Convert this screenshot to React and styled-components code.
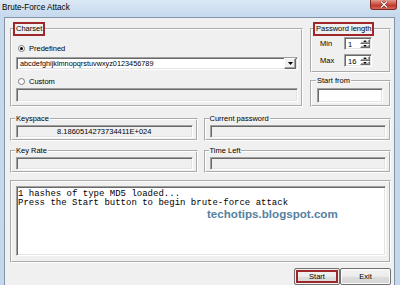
import React from 'react'
import styled, {createGlobalStyle, css} from 'styled-components'

const GlobalStyle = createGlobalStyle`
  html, body {
    margin: 0;
    padding: 0;
  }
  body {
    width: 400px;
    height: 285px;
    overflow: hidden;
    background: #c4d7eb;
    font-family: "Liberation Sans", Arial, sans-serif;
  }
  * {
    box-sizing: border-box;
  }
`

const sunken = css`
  border-style: solid;
  border-width: 1px;
  border-color: #a0a0a0 #ffffff #ffffff #a0a0a0;
  box-shadow: inset 1px 1px 0 #696969, inset -1px -1px 0 #e3e3e3;
`

const raised = css`
  border-style: solid;
  border-width: 1px;
  border-color: #ffffff #696969 #696969 #ffffff;
  box-shadow: inset -1px -1px 0 #a0a0a0;
  background: #f0f0f0;
`

const Window = styled.div`
  width: 400px;
  height: 285px;
  display: flex;
  flex-direction: column;
  background: linear-gradient(180deg, #dbe8f5 0px, #c6d9ed 16px, #c4d7eb 100%);
  overflow: hidden;
`

const TitleBar = styled.div`
  height: 17px;
  flex-shrink: 0;
  display: flex;
  align-items: flex-start;
  justify-content: space-between;
`

const Title = styled.span`
  font-size: 8.2px;
  line-height: 9px;
  color: #000;
  padding: 3px 0 0 2px;
`

const CloseButton = styled.div`
  width: 27px;
  height: 10px;
  margin-right: 3px;
  border: 1px solid #7d2c25;
  border-top: none;
  border-radius: 0 0 3px 3px;
  background: linear-gradient(180deg, #e39a8a 0%, #cf5546 45%, #c2392c 60%, #d7685a 100%);
  display: flex;
  align-items: center;
  justify-content: center;
`

const Client = styled.div`
  flex: 1;
  margin: 0 5px 0 4px;
  border: 1px solid #8395ab;
  border-bottom: none;
  background: #f0f0f0;
  padding: 4px 3px 0 5px;
  display: flex;
  flex-direction: column;
`

const TopRow = styled.div`
  display: grid;
  grid-template-columns: 293px 81px;
  column-gap: 7px;
`

const SideColumn = styled.div`
  display: flex;
  flex-direction: column;
  gap: 3px;
`

const Group = styled.fieldset`
  margin: 0;
  min-width: 0;
  border: 2px groove #ffffff;
  padding: ${p => p.$pad || '0 3px 1px 4px'};
  display: flex;
  flex-direction: column;
`

const Legend = styled.legend`
  font-size: 7.5px;
  line-height: 9px;
  color: #000;
  padding: 0 1px;
  margin-left: -1px;
  ${p => p.$highlight && css`
    line-height: 10px;
    border: 2px solid #9e272b;
    padding: 0 1px 0 1px;
    margin-left: -3px;
  `}
`

const RadioRow = styled.label`
  height: 12px;
  margin-top: ${p => p.$top}px;
  padding-left: 2px;
  display: flex;
  align-items: center;
  gap: 4px;
  font-size: 7.5px;
  color: #000;
`

const RadioCircle = styled.span`
  width: 7px;
  height: 7px;
  border-radius: 50%;
  border: 1px solid #7a7a7a;
  background: #fff;
  display: flex;
  align-items: center;
  justify-content: center;
  &::after {
    content: "";
    width: 3px;
    height: 3px;
    border-radius: 50%;
    background: ${p => p.$checked ? '#000' : 'transparent'};
  }
`

const Field = styled.div`
  ${sunken};
  height: ${p => p.$h}px;
  margin-top: ${p => p.$top || 0}px;
  background: ${p => p.$white ? '#ffffff' : '#f0f0f0'};
  font-size: 7.5px;
  color: #000;
  display: flex;
  align-items: center;
  justify-content: ${p => p.$center ? 'center' : 'flex-start'};
  padding: 0 2px;
`

const ComboText = styled.span`
  flex: 1;
  font-size: 7.3px;
  padding-left: 1px;
`

const DropButton = styled.span`
  ${raised};
  width: 12px;
  height: 11px;
  display: flex;
  align-items: center;
  justify-content: center;
  margin-right: -1px;
`

const SpinRow = styled.div`
  height: 13px;
  margin-top: ${p => p.$top}px;
  padding-left: 4px;
  display: flex;
  align-items: center;
`

const SpinLabel = styled.span`
  width: 24px;
  font-size: 7.5px;
  color: #000;
`

const Spinner = styled.div`
  ${sunken};
  width: 28px;
  height: 13px;
  background: #fff;
  display: flex;
  align-items: stretch;
  padding: 1px 1px 1px 3px;
`

const SpinValue = styled.span`
  flex: 1;
  font-size: 7.5px;
  line-height: 11px;
`

const SpinButtons = styled.span`
  width: 10px;
  display: flex;
  flex-direction: column;
`

const SpinButton = styled.span`
  ${raised};
  flex: 1;
  display: flex;
  align-items: center;
  justify-content: center;
`

const InfoGrid = styled.div`
  margin-top: 7px;
  display: grid;
  grid-template-columns: 1fr 1fr;
  column-gap: 6px;
  row-gap: 5px;
`

const LogGroup = styled.fieldset`
  margin: 7px 0 0 0;
  min-width: 0;
  border: 2px groove #ffffff;
  padding: 4px 3px 5px 4px;
`

const LogArea = styled.div`
  ${sunken};
  height: 70px;
  background: #fff;
  padding: 3px 0 0 1px;
  font-family: "Liberation Mono", "Courier New", monospace;
  font-size: 9px;
  line-height: 9px;
  color: #000;
  white-space: pre;
`

const Watermark = styled.div`
  padding-left: 189px;
  margin-top: 0;
  font-family: "Liberation Sans", Arial, sans-serif;
  font-weight: bold;
  font-size: 11.6px;
  line-height: 12px;
  color: #55819f;
`

const ButtonRow = styled.div`
  margin-top: 5px;
  display: flex;
  justify-content: flex-end;
`

const Button = styled.button`
  width: ${p => p.$w}px;
  height: 17px;
  margin: 0;
  padding: 0;
  font-family: "Liberation Sans", Arial, sans-serif;
  font-size: 7.5px;
  color: #000;
  border: 1px solid #707070;
  border-radius: 2px;
  background: linear-gradient(180deg, #f4f4f4 0%, #ebebeb 50%, #dddddd 51%, #d6d6d6 100%);
  box-shadow: ${p => p.$highlight
    ? 'inset 0 0 0 1px #f2f2f2, inset 0 0 0 3px #9e272b'
    : 'inset 0 0 0 1px #fbfbfb'};
`

const Tri = ({down = true, size = 5}) => (
  <svg width={size} height={size - 2} viewBox="0 0 5 3">
    <path d={down ? 'M0 0 H5 L2.5 3 Z' : 'M0 3 H5 L2.5 0 Z'} fill="#000"/>
  </svg>
)

const CloseIcon = () => (
  <svg width="8" height="7" viewBox="0 0 8 7">
    <path d="M1 0.5 L7 6.5 M7 0.5 L1 6.5" stroke="#5a1a14" strokeWidth="2.4"/>
    <path d="M1 0.5 L7 6.5 M7 0.5 L1 6.5" stroke="#ffffff" strokeWidth="1.3"/>
  </svg>
)

function SpinBox({label, value, top}) {
  return (
    <SpinRow $top={top}>
      <SpinLabel>{label}</SpinLabel>
      <Spinner>
        <SpinValue>{value}</SpinValue>
        <SpinButtons>
          <SpinButton><Tri down={false} size={4}/></SpinButton>
          <SpinButton><Tri size={4}/></SpinButton>
        </SpinButtons>
      </Spinner>
    </SpinRow>
  )
}

function InfoBox({title, value}) {
  return (
    <Group $pad="0 3px 1px 4px">
      <Legend>{title}</Legend>
      <Field $h={13} $top={2} $center>{value}</Field>
    </Group>
  )
}

export default function App() {
  return (
    <>
      <GlobalStyle/>
      <Window>
        <TitleBar>
          <Title>Brute-Force Attack</Title>
          <CloseButton><CloseIcon/></CloseButton>
        </TitleBar>
        <Client>
          <TopRow>
            <Group $pad="0 3px 3px 4px">
              <Legend $highlight>Charset</Legend>
              <RadioRow $top={6}>
                <RadioCircle $checked/>
                Predefined
              </RadioRow>
              <Field $h={13} $top={3} $white>
                <ComboText>abcdefghijklmnopqrstuvwxyz0123456789</ComboText>
                <DropButton><Tri/></DropButton>
              </Field>
              <RadioRow $top={5}>
                <RadioCircle/>
                Custom
              </RadioRow>
              <Field $h={14} $top={1}/>
            </Group>
            <SideColumn>
              <Group $pad="0 3px 4px 4px">
                <Legend $highlight>Password length</Legend>
                <SpinBox label="Min" value="1" top={1}/>
                <SpinBox label="Max" value="16" top={4}/>
              </Group>
              <Group $pad="0 6px 2px 5px">
                <Legend>Start from</Legend>
                <Field $h={15} $top={3} $white/>
              </Group>
            </SideColumn>
          </TopRow>
          <InfoGrid>
            <InfoBox title="Keyspace" value="8.1860514273734411E+024"/>
            <InfoBox title="Current password" value=""/>
            <InfoBox title="Key Rate" value=""/>
            <InfoBox title="Time Left" value=""/>
          </InfoGrid>
          <LogGroup>
            <LogArea>
              {'1 hashes of type MD5 loaded...\nPress the Start button to begin brute-force attack'}
              <Watermark>techotips.blogspot.com</Watermark>
            </LogArea>
          </LogGroup>
          <ButtonRow>
            <Button $w={46} $highlight>Start</Button>
            <Button $w={51}>Exit</Button>
          </ButtonRow>
        </Client>
      </Window>
    </>
  )
}
